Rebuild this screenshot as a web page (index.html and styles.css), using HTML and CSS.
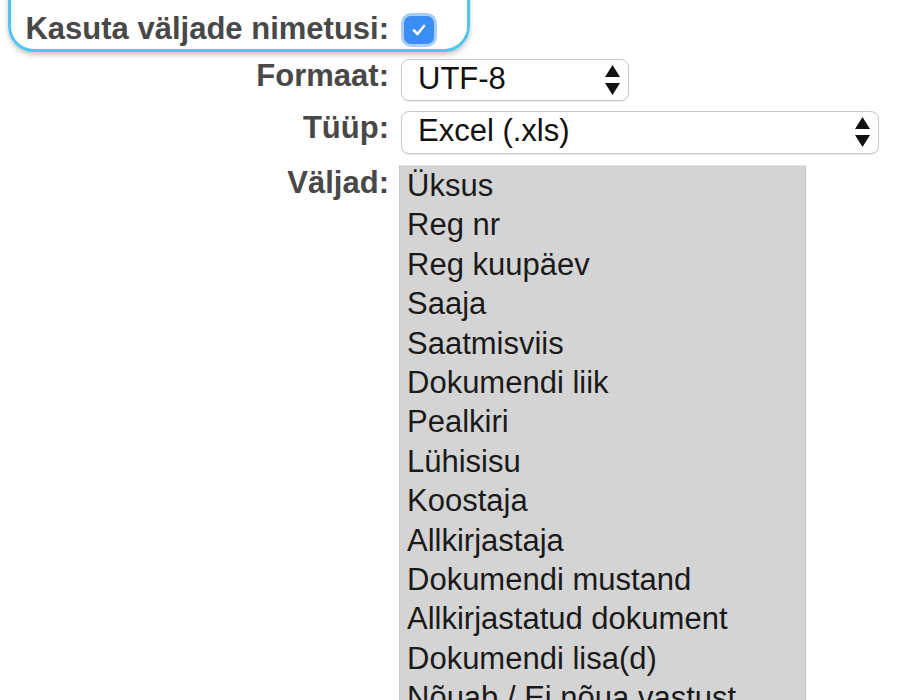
FILE: index.html
```html
<!DOCTYPE html>
<html lang="et">
<head>
<meta charset="utf-8">
<title>Eksport</title>
<link rel="stylesheet" href="styles.css">
</head>
<body>
<form class="form">
  <div class="field field-focus">
    <label class="label">Kasuta väljade nimetusi:</label>
    <div class="control">
      <span class="checkbox" role="checkbox" aria-checked="true">
        <svg viewBox="0 0 20 20" width="20" height="20"><path d="M5 10.5 L8.5 14 L15 6" fill="none" stroke="#fff" stroke-width="2.6" stroke-linecap="round" stroke-linejoin="round"/></svg>
      </span>
    </div>
  </div>
  <div class="field">
    <label class="label">Formaat:</label>
    <div class="control">
      <div class="select select-short">
        <span class="select-text">UTF-8</span>
        <svg class="arrows" viewBox="0 0 15 30" width="15" height="30"><path d="M7.5 0 L15 12 L0 12 Z M0 18 L15 18 L7.5 30 Z" fill="#111"/></svg>
      </div>
    </div>
  </div>
  <div class="field">
    <label class="label">Tüüp:</label>
    <div class="control">
      <div class="select select-long">
        <span class="select-text">Excel (.xls)</span>
        <svg class="arrows" viewBox="0 0 15 30" width="15" height="30"><path d="M7.5 0 L15 12 L0 12 Z M0 18 L15 18 L7.5 30 Z" fill="#111"/></svg>
      </div>
    </div>
  </div>
  <div class="field field-list">
    <label class="label">Väljad:</label>
    <div class="control">
      <ul class="listbox">
        <li>Üksus</li>
        <li>Reg nr</li>
        <li>Reg kuupäev</li>
        <li>Saaja</li>
        <li>Saatmisviis</li>
        <li>Dokumendi liik</li>
        <li>Pealkiri</li>
        <li>Lühisisu</li>
        <li>Koostaja</li>
        <li>Allkirjastaja</li>
        <li>Dokumendi mustand</li>
        <li>Allkirjastatud dokument</li>
        <li>Dokumendi lisa(d)</li>
        <li>Nõuab / Ei nõua vastust</li>
      </ul>
    </div>
  </div>
</form>
</body>
</html>
```
FILE: styles.css
```css
html, body {
  margin: 0;
  padding: 0;
  background: #fff;
  overflow: hidden;
}
body {
  font-family: "Liberation Sans", Arial, sans-serif;
  font-size: 31px;
  color: #1a1a1a;
}
.form {
  display: flex;
  flex-direction: column;
  width: 900px;
}
.field {
  display: grid;
  grid-template-columns: 389px 1fr;
  column-gap: 12px;
  align-items: start;
  margin-top: 10px;
}
.label {
  text-align: right;
  font-weight: bold;
  color: #484848;
  line-height: 35px;
  margin-top: -1px;
  white-space: nowrap;
}
.field-focus {
  position: relative;
  margin-top: 0;
  height: 49px;
}
.field-focus::before {
  content: "";
  position: absolute;
  left: 8px;
  top: -40px;
  width: 462px;
  height: 92px;
  box-sizing: border-box;
  border: 3px solid #52c4f0;
  border-radius: 26px;
  box-shadow: 0 3px 5px rgba(0, 0, 0, 0.22);
  pointer-events: none;
}
.field-focus .label {
  margin-top: 11px;
}
.checkbox {
  display: flex;
  align-items: center;
  justify-content: center;
  width: 30px;
  height: 28px;
  margin: 16px 0 0 3px;
  background: #3b8ef3;
  border-radius: 7px;
  box-shadow: 0 0 0 3px #a9cdf7;
}
.select {
  position: relative;
  box-sizing: border-box;
  height: 42px;
  border: 1px solid #c9c9c9;
  border-radius: 8px;
  background: #fff;
  box-shadow: 0 1px 1px rgba(0, 0, 0, 0.08);
  display: flex;
  align-items: flex-start;
}
.select-short {
  width: 228px;
}
.select-long {
  width: 478px;
  height: 43px;
}
.select-text {
  line-height: 32px;
  padding: 3px 0 0 16px;
  color: #111;
}
.arrows {
  position: absolute;
  right: 8px;
  top: 5px;
}
.field-list {
  margin-top: 11px;
}
.field-list .label {
  margin-top: 0;
}
.listbox {
  list-style: none;
  margin: 0 0 0 -2px;
  padding: 0;
  width: 407px;
  box-sizing: border-box;
  background: #d4d4d4;
  border: 1px solid #c4c4c4;
  border-top-color: #e2e2e2;
}
.listbox li {
  line-height: 35px;
  padding: 2px 6px 2.4px 7px;
  color: #1a1a1a;
  white-space: nowrap;
}
```
